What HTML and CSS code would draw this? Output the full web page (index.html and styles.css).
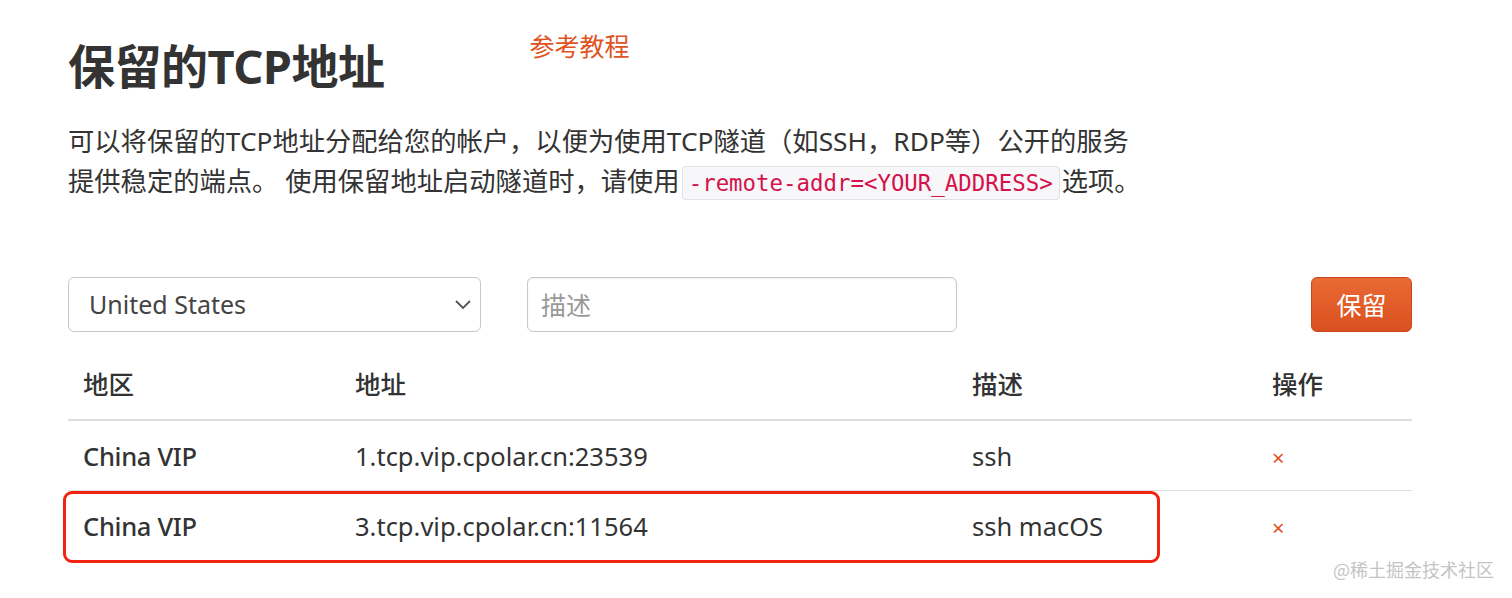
FILE: index.html
```html
<!DOCTYPE html>
<html lang="zh-CN">
<head>
<meta charset="utf-8">
<title>保留的TCP地址</title>
<link rel="stylesheet" href="styles.css">
</head>
<body>
<div class="page">
  <div class="head">
    <h1 class="title">保留的TCP地址</h1>
    <a class="ref" href="#">参考教程</a>
  </div>
  <p class="desc">可以将保留的TCP地址分配给您的帐户，以便为使用TCP隧道（如SSH，RDP等）公开的服务<br>提供稳定的端点。 使用保留地址启动隧道时，请使用<code class="code">-remote-addr=&lt;YOUR_ADDRESS&gt;</code>选项。</p>

  <div class="form">
    <div class="select">
      <span>United States</span>
      <svg class="chev" width="18" height="12" viewBox="0 0 18 12"><path d="M2 3 L9 10 L16 3" fill="none" stroke="#555" stroke-width="1.8"/></svg>
    </div>
    <div class="input"><span class="ph">描述</span></div>
    <button class="btn">保留</button>
  </div>

  <div class="table-wrap">
    <table class="table">
      <thead>
        <tr><th class="c1">地区</th><th class="c2">地址</th><th class="c3">描述</th><th class="c4">操作</th></tr>
      </thead>
      <tbody>
        <tr><td class="region">China VIP</td><td>1.tcp.vip.cpolar.cn:23539</td><td>ssh</td><td><span class="del">×</span></td></tr>
        <tr><td class="region">China VIP</td><td>3.tcp.vip.cpolar.cn:11564</td><td>ssh macOS</td><td><span class="del">×</span></td></tr>
      </tbody>
    </table>
    <div class="mark"></div>
  </div>
</div>
<div class="wm">@稀土掘金技术社区</div>
</body>
</html>
```

FILE: styles.css
```css
html, body {
  margin: 0;
  padding: 0;
  background: #fff;
}
body {
  font-family: "Noto Sans", "Noto Sans CJK SC", sans-serif;
  color: #333;
  width: 1512px;
  height: 598px;
  overflow: hidden;
  position: relative;
}
.page {
  padding: 0 100px 0 68px;
}
.head {
  display: flex;
  align-items: flex-start;
}
.title {
  margin: 36px 0 0 0;
  font-size: 47px;
  line-height: 60px;
  font-weight: 700;
  color: #333;
  letter-spacing: -0.5px;
}
.ref {
  margin: 31px 0 0 145px;
  font-size: 25px;
  line-height: 30px;
  color: #e0531f;
  text-decoration: none;
}
.desc {
  margin: 25px 0 0 0;
  font-size: 26.3px;
  line-height: 40px;
  color: #333;
}
.code {
  font-family: "DejaVu Sans Mono", monospace;
  font-size: 22.4px;
  color: #d4124b;
  background: #f7f7f9;
  border: 1px solid #e1e1e8;
  border-radius: 4px;
  padding: 3px 6px;
  margin: 0 2px;
}
.form {
  margin-top: 74px;
  display: flex;
  align-items: center;
  height: 55px;
}
.select {
  box-sizing: border-box;
  width: 413px;
  height: 55px;
  border: 1px solid #c8c8c8;
  border-radius: 6px;
  display: flex;
  align-items: center;
  justify-content: space-between;
  padding: 0 8px 2px 20px;
  font-size: 25px;
  color: #444;
}
.chev {
  display: block;
}
.input {
  box-sizing: border-box;
  width: 430px;
  height: 55px;
  margin-left: 46px;
  border: 1px solid #c8c8c8;
  border-radius: 6px;
  display: flex;
  align-items: center;
  padding: 0 13px 2px;
  box-shadow: inset 0 1px 2px rgba(0,0,0,0.06);
}
.ph {
  font-size: 25px;
  color: #999;
}
.btn {
  margin-left: auto;
  width: 101px;
  height: 55px;
  border: 1px solid #c9471a;
  border-radius: 6px;
  background: linear-gradient(#ea6a35, #d9501f);
  color: #fff;
  font-family: "Noto Sans CJK SC", sans-serif;
  font-size: 25px;
  padding: 0 0 2px;
}
.table-wrap {
  position: relative;
  margin-top: 19px;
}
.table {
  width: 1344px;
  border-collapse: collapse;
  font-size: 25.5px;
}
.table th {
  text-align: left;
  font-weight: 500;
  height: 63px;
  padding: 0 15px 5px;
  border-bottom: 2px solid #ddd;
  color: #333;
}
.table td {
  height: 69px;
  padding: 0 15px;
  color: #333;
}
.table tbody tr:first-child td {
  border-bottom: 1px solid #ddd;
}
.c1 { width: 242px; }
.c2 { width: 587px; }
.c3 { width: 270px; }
.region {
  font-weight: 500;
  letter-spacing: -0.3px;
}
.del {
  color: #e0531f;
  font-size: 22px;
  padding-left: 0;
}
.mark {
  position: absolute;
  left: -5px;
  top: 140px;
  width: 1097px;
  height: 72px;
  box-sizing: border-box;
  border: 3px solid #f2230f;
  border-radius: 9px;
}
.wm {
  position: absolute;
  left: 1333px;
  top: 556px;
  font-size: 18px;
  color: #c4c4c4;
  font-family: "Noto Sans CJK SC", sans-serif;
}
```
